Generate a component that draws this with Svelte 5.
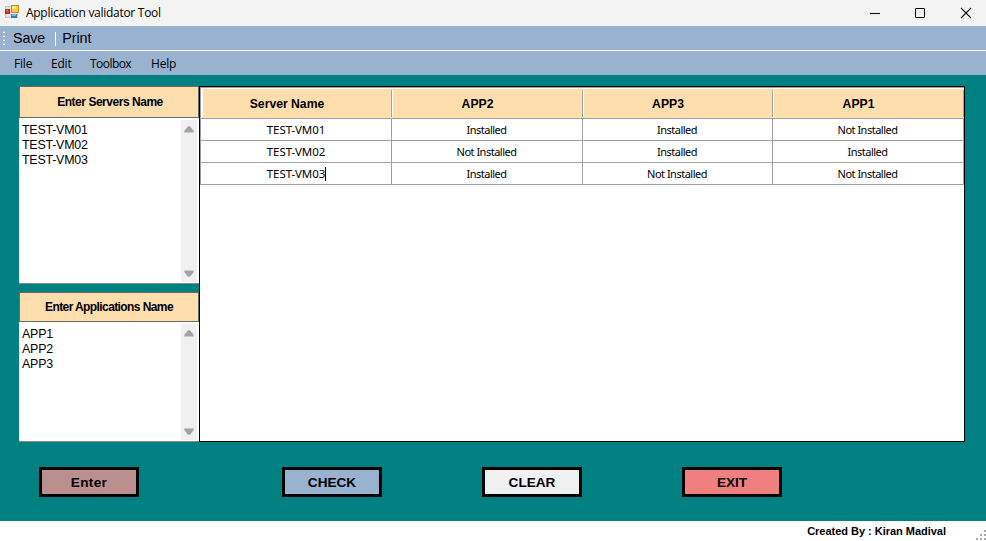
<script>
  const menus = ['File', 'Edit', 'Toolbox', 'Help'];
  const columns = ['Server Name', 'APP2', 'APP3', 'APP1'];
  const rows = [
    ['TEST-VM01', 'Installed', 'Installed', 'Not Installed'],
    ['TEST-VM02', 'Not Installed', 'Installed', 'Installed'],
    ['TEST-VM03', 'Installed', 'Not Installed', 'Not Installed']
  ];
  const panels = [
    { cls: 'servers', title: 'Enter Servers Name', lines: ['TEST-VM01', 'TEST-VM02', 'TEST-VM03'] },
    { cls: 'apps', title: 'Enter Applications Name', lines: ['APP1', 'APP2', 'APP3'] }
  ];
  const buttons = [
    { cls: 'enter', label: 'Enter' },
    { cls: 'check', label: 'CHECK' },
    { cls: 'clear', label: 'CLEAR' },
    { cls: 'exit', label: 'EXIT' }
  ];
</script>

<div class="window">
  <header class="titlebar">
    <svg class="logo" width="14" height="14" viewBox="0 0 14 14" shape-rendering="crispEdges">
      <rect x="0.5" y="1.5" width="12" height="11" fill="#e4e4e4" stroke="#c4c4c4" />
      <rect x="0" y="4" width="5" height="5" fill="#b02a20" />
      <rect x="1" y="5" width="3" height="3" fill="#d8382a" />
      <rect x="1" y="5" width="2" height="1" fill="#ee8070" />
      <rect x="6" y="0" width="8" height="8" fill="#c09020" />
      <rect x="7" y="1" width="6" height="6" fill="#fcc838" />
      <rect x="7" y="1" width="4" height="3" fill="#ffe48a" />
      <rect x="6" y="9" width="6" height="4" fill="#3a78d4" />
      <rect x="7" y="9" width="4" height="2" fill="#7fb2f4" />
    </svg>
    <span class="title">Application validator Tool</span>
    <svg class="controls" width="102" height="12" viewBox="0 0 102 12" fill="none" stroke="#111" stroke-width="1.1">
      <path d="M0 6.5h10" />
      <rect x="45.5" y="1.5" width="9" height="9" rx="0.8" />
      <path d="M91 1l10 10M101 1l-10 10" />
    </svg>
  </header>

  <div class="toolbar">
    <svg width="3" height="15" viewBox="0 0 3 15" shape-rendering="crispEdges">
      {#each [0, 4, 8, 12] as y}
        <rect x="0" {y} width="2" height="2" fill="#bcc4ce" />
        <rect x="1" y={y + 1} width="1" height="1" fill="#fff" />
        <rect x="0" y={y + 1} width="1" height="1" fill="#fff" />
      {/each}
    </svg>
    <span class="save">Save</span>
    <i></i>
    <span class="print">Print</span>
  </div>

  <nav>
    {#each menus as m}<span class={m.toLowerCase()}>{m}</span>{/each}
  </nav>

  <main>
    <div class="side">
      {#each panels as p}
        <section class={p.cls}>
          <h2><span>{p.title}</span></h2>
          <div class="box">
            <div class="lines">{#each p.lines as l}<div>{l}</div>{/each}</div>
            <div class="scroll">
              <svg width="10" height="7" viewBox="0 0 10 7"><path d="M4 .3h2l3.700 4.700V6.500H.3V5z" fill="#a3a3a3" /></svg>
              <svg width="10" height="7" viewBox="0 0 10 7"><path d="M4 6.700h2L9.700 2V.5H.3V2z" fill="#a3a3a3" /></svg>
            </div>
          </div>
        </section>
      {/each}
    </div>
    <div class="gridview">
      <div class="row head">
        {#each columns as c}<div class="cell"><span>{c}</span></div>{/each}
      </div>
      {#each rows as r, ri}
        <div class="row">
          {#each r as c, ci}
            <div class="cell" class:name={ci === 0}><span>{c}</span>{#if ri === 2 && ci === 0}<b class="caret"></b>{/if}</div>
          {/each}
        </div>
      {/each}
    </div>
  </main>

  <div class="actions">
    {#each buttons as b}<button class={b.cls}>{b.label}</button>{/each}
  </div>

  <footer>
    <span>Created By : Kiran Madival</span>
    <svg width="10" height="10" viewBox="0 0 10 10" fill="#a6a6a6" shape-rendering="crispEdges">
      <path d="M8 0h2v2H8zM4 4h2v2H4zM8 4h2v2H8zM0 8h2v2H0zM4 8h2v2H4zM8 8h2v2H8z" />
    </svg>
  </footer>
</div>

<style>
  .window { width: 986px; height: 541px; display: flex; flex-direction: column; background: #008080; overflow: hidden; color: #000; font-family: "Liberation Sans", Arial, sans-serif; white-space: nowrap; }
  .window * { box-sizing: border-box; }
  .titlebar { height: 26px; background: #f3f3f3; display: flex; align-items: center; padding: 0 14px 0 5px; flex: none; }
  .logo { margin-bottom: 2px; }
  .title { font: 12px/26px "Open Sans", sans-serif; margin-left: 7px; letter-spacing: -0.28px; }
  .controls { margin-left: auto; }
  .toolbar { height: 25px; flex: none; background: #99b2d0; border-bottom: 1px solid #fff; display: flex; align-items: center; padding-left: 3px; font-size: 14.3px; }
  .toolbar i { width: 1px; height: 14px; background: #fff; margin: 2px 6px 0 10px; }
  .save { margin-left: 7px; letter-spacing: -0.1px; }
  .print { letter-spacing: -0.05px; }
  nav { height: 24px; flex: none; background: #99b2d0; display: flex; padding-left: 14px; font: 12px/25px "Open Sans", sans-serif; letter-spacing: -0.2px; }
  nav span { flex: none; }
  .file { width: 37px; }
  .edit { width: 39px; }
  .toolbox { width: 61px; letter-spacing: -0.55px; }
  main { flex: none; display: flex; padding: 11px 0 0 19px; }
  .side { width: 180px; height: 356px; display: flex; flex-direction: column; gap: 8px; }
  section { display: flex; flex-direction: column; }
  .servers { height: 198px; }
  .apps { height: 150px; }
  h2 { margin: 0; height: 32px; flex: none; border: 1px solid #696969; background: #ffdead; display: flex; align-items: center; justify-content: center; font-size: 12px; font-weight: bold; }
  .apps h2 { height: 30px; }
  .servers h2 span { letter-spacing: -0.47px; margin-left: 2px; }
  .apps h2 span { letter-spacing: -0.59px; }
  .box { flex: 1; background: #fff; border-bottom: 1px solid #8a8a8a; display: flex; justify-content: space-between; padding: 2px 2px 1px 3px; }
  .lines { font-size: 12.4px; line-height: 15px; padding-top: 3px; letter-spacing: -0.2px; }
  .scroll { width: 16px; background: #f0f0f0; display: flex; flex-direction: column; justify-content: space-between; align-items: center; padding: 6px 0 5px; }
  .gridview { width: 766px; height: 356px; border: 1px solid #000; background: #fff; }
  .row { display: flex; width: 764px; height: 22px; border-left: 1px solid #a0a0a0; border-bottom: 1px solid #a0a0a0; }
  .cell { width: 191px; border-right: 1px solid #a0a0a0; display: flex; align-items: center; justify-content: center; font: 11px/20px "Noto Sans", sans-serif; letter-spacing: -0.5px; padding-right: 1px; }
  .cell:nth-child(3) { width: 190px; }
  .name { letter-spacing: -0.1px; font-size: 11.5px; padding: 0; }
  .caret { width: 1px; height: 14px; background: #000; margin-right: -1px; }
  .head { height: 32px; border-top: 1px solid #a0a0a0; }
  .head .cell { font: bold 12.200px/28px "Liberation Sans", sans-serif; letter-spacing: 0; border-right: 0; border-top: 1px solid #fff; background: #ffdead; position: relative; padding: 0 20px 0 0; }
  .head .cell:first-child { border-left: 1px solid #fff; }
  .head .cell::after { content: ""; position: absolute; right: 0; top: 1px; height: 27px; width: 1px; background: #a0a0a0; }
  .head .cell::before { content: ""; position: absolute; left: 0; top: 1px; height: 27px; width: 1px; background: #fff; }
  .actions { flex: 1; display: flex; padding: 25px 0 0 39px; }
  button { width: 100px; height: 30px; border: 3px solid #000; border-radius: 0; padding: 0; color: #000; font: bold 13.6px "Liberation Sans", sans-serif; }
  .enter { background: #bc8f8f; margin-right: 143px; letter-spacing: 0.35px; }
  .check { background: #99b2d0; margin-right: 100px; }
  .clear { background: #f0f0f0; margin-right: 100px; }
  .exit { background: #f08080; }
  footer { height: 20px; flex: none; background: #fff; display: flex; justify-content: flex-end; font: bold 11px/20px "Liberation Sans", sans-serif; }
  footer span { margin-right: 30px; letter-spacing: -0.02px; }
  footer svg { margin-top: 9px; }
</style>
